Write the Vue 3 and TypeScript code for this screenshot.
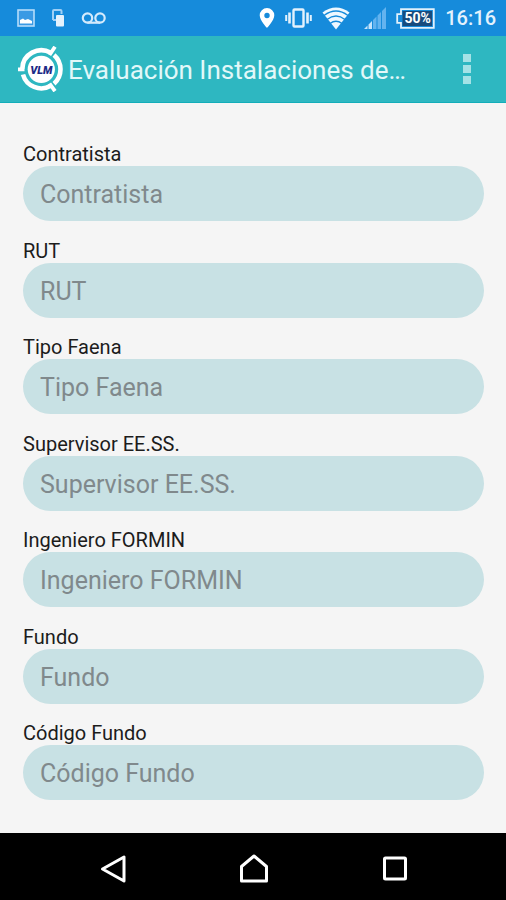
<script setup lang="ts">
import { reactive } from 'vue'

interface Field {
  id: string
  label: string
}

const fields: Field[] = [
  { id: 'contratista', label: 'Contratista' },
  { id: 'rut', label: 'RUT' },
  { id: 'tipo-faena', label: 'Tipo Faena' },
  { id: 'supervisor', label: 'Supervisor EE.SS.' },
  { id: 'ingeniero', label: 'Ingeniero FORMIN' },
  { id: 'fundo', label: 'Fundo' },
  { id: 'codigo-fundo', label: 'Código Fundo' },
]

const values = reactive<Record<string, string>>({})
</script>

<template>
  <div class="screen">
    <div class="status">
      <div class="status-side left">
        <svg width="18" height="18" viewBox="0 0 18 18">
          <rect x="1" y="1" width="16" height="16" fill="#3a9ae4" stroke="#b5dcfa" stroke-width="1.6" />
          <path d="M3 14.500V11l3-1.500 2 1.500 3-1 4 2v2.500z" fill="#fff" />
        </svg>
        <svg width="12" height="18" viewBox="0 0 12 18">
          <path d="M1 11V2q0-1 1-1h6.500q1 0 1 1v3M1 11h3" fill="none" stroke="#9fd0f6" stroke-width="2" />
          <rect x="4" y="6" width="8" height="11.500" rx="1" fill="#e4f2fd" />
        </svg>
        <svg width="26" height="14" viewBox="0 0 26 14" fill="none" stroke="#d3eafc" stroke-width="2.200">
          <circle cx="6.500" cy="7" r="4.700" />
          <circle cx="19" cy="7" r="4.700" />
          <path d="M6.500 11.700H19" />
        </svg>
      </div>
      <div class="status-side right">
        <svg width="16" height="20" viewBox="0 0 16 20">
          <path fill-rule="evenodd" d="M8 0a7.300 7.300 0 0 0-7.300 7.300C.7 12.500 8 20 8 20s7.300-7.500 7.300-12.700A7.300 7.300 0 0 0 8 0zm0 4.800a2.700 2.700 0 1 1 0 5.400 2.700 2.700 0 0 1 0-5.400z" fill="#fff" />
        </svg>
        <svg width="27" height="20" viewBox="0 0 27 20" fill="none" stroke="#e3f2fd">
          <rect x="8.500" y="1.500" width="10" height="17" rx="1" stroke-width="2.400" />
          <path d="M4.500 4.500v11M22.500 4.500v11" stroke-width="2.600" />
          <path d="M1.200 7v6M25.800 7v6" stroke-width="2" />
        </svg>
        <svg width="28" height="23" viewBox="0 0 28 23">
          <path d="M14 22.500L.5 5.500Q14-4.500 27.500 5.500z" fill="#eef8ff" />
          <g fill="none" stroke="#168bdb" stroke-width="1.300">
            <path d="M2 8.500Q14-.5 26 8.500M5 12.500Q14 5.500 23 12.500M8 16.500q6-4.500 12 0" />
          </g>
        </svg>
        <svg class="signal" width="22" height="22" viewBox="0 0 22 22">
          <path d="M0 22l3.500-3.500V22zM4.500 22v-4.500L8 14v8z" fill="#c5e4fc" />
          <path d="M9 22v-9l3.500-3.500V22zM13.500 22V8.500L17 5v17zM18 22V4l4-4v22z" fill="#63b3ef" />
        </svg>
        <div class="battery">
          <svg width="39" height="21" viewBox="0 0 39 21">
            <path d="M5 1.200h32.800v18.600H5v-5H1.200V6.200H5z" fill="#168bdb" stroke="#e1f1fc" stroke-width="1.800" />
            <path d="M6.500 3h29.500v15H6.500z" fill="#174b7d" />
          </svg>
          <span class="percent">50%</span>
        </div>
        <span class="clock">16:16</span>
      </div>
    </div>

    <header class="appbar">
      <svg class="logo" width="46" height="46" viewBox="0 0 46 46">
        <g fill="none" stroke="#fff" stroke-width="4.600">
          <path d="M4.300 22.600A19 19 0 0 1 32.800 6.800" />
          <path d="M36 8.900A19.200 19.200 0 0 1 36 37.700" />
          <path d="M5 28.500A19 19 0 0 0 32.800 39.800" />
        </g>
        <g fill="none" stroke="#fff" stroke-width="3.800">
          <path d="M31.500 9L37 .8M31.500 37.500l5.500 7.700M0 23.300h6.500" />
        </g>
        <circle cx="23.300" cy="23.300" r="13.600" fill="#fff" />
        <text x="23.300" y="27.500" text-anchor="middle" class="logo-text">VLM</text>
      </svg>
      <h1 class="title">Evaluación Instalaciones de…</h1>
      <button class="more" type="button" aria-label="Más opciones">
        <svg width="8" height="30" viewBox="0 0 8 30" fill="#a5e2e6">
          <rect width="8" height="8" y="0" />
          <rect width="8" height="8" y="11" />
          <rect width="8" height="8" y="22" />
        </svg>
      </button>
    </header>

    <form class="form" @submit.prevent>
      <div v-for="field in fields" :key="field.id" class="field">
        <label :for="field.id">{{ field.label }}</label>
        <input :id="field.id" v-model="values[field.id]" type="text" :placeholder="field.label" />
      </div>
    </form>

    <nav class="navbar">
      <button type="button" aria-label="Atrás">
        <svg width="28" height="30" viewBox="0 0 28 30">
          <path d="M3.500 15L25 3v24z" />
        </svg>
      </button>
      <button type="button" aria-label="Inicio">
        <svg width="30" height="30" viewBox="0 0 30 30">
          <path d="M2.500 27V12.500L15 2l12.500 10.500V27z" />
        </svg>
      </button>
      <button type="button" aria-label="Recientes">
        <svg width="28" height="30" viewBox="0 0 28 30">
          <rect x="3.500" y="4" width="21" height="21" rx="1" />
        </svg>
      </button>
    </nav>
  </div>
</template>

<style>
body {
  margin: 0;
  background: #f5f5f5;
}
</style>

<style scoped>
.screen {
  min-height: 100vh;
  display: flex;
  flex-direction: column;
  background: #f5f5f5;
  font-family: Roboto, "Liberation Sans", sans-serif;
}

.status {
  height: 36px;
  padding: 0 10px 0 17px;
  display: flex;
  align-items: center;
  justify-content: space-between;
  background: #168bdb;
}

.status-side {
  display: flex;
  align-items: center;
}

.left {
  gap: 17px;
}

.right {
  gap: 10px;
}

.signal {
  margin-left: 4px;
}

.battery {
  position: relative;
  display: flex;
}

.percent {
  position: absolute;
  inset: 0 0 0 4px;
  display: flex;
  align-items: center;
  justify-content: center;
  font-size: 14px;
  font-weight: 700;
  color: #fff;
}

.clock {
  font-size: 20px;
  font-weight: 500;
  color: #e3f2fd;
}

.appbar {
  height: 67px;
  box-sizing: border-box;
  padding: 0 24px 0 18px;
  display: flex;
  align-items: center;
  background: #2eb7c1;
  border-bottom: 1px solid #12adb9;
}

.logo {
  flex: none;
}

.logo-text {
  font: italic 900 11px Roboto, sans-serif;
  fill: #1c2a86;
}

.title {
  flex: 1;
  margin: 0 0 0 4px;
  padding-top: 2px;
  font-size: 26px;
  font-weight: 400;
  line-height: 32px;
  color: #e2f8f9;
  white-space: nowrap;
}

.more {
  display: flex;
  padding: 8px 11px;
  border: 0;
  background: none;
}

.form {
  flex: 1;
  display: flex;
  flex-direction: column;
  justify-content: space-between;
  padding: 39px 22px 33px 23px;
}

.field {
  display: flex;
  flex-direction: column;
}

label {
  font-size: 20px;
  line-height: 24px;
  color: #1c1c1c;
}

input {
  width: 100%;
  height: 55px;
  box-sizing: border-box;
  padding: 2px 17px 0;
  border: 0;
  border-radius: 28px;
  background: #c8e1e4;
  font-family: inherit;
  font-size: 25px;
  color: #333;
}

input::placeholder {
  color: #80898c;
  opacity: 1;
}

.navbar {
  height: 67px;
  display: flex;
  align-items: center;
  justify-content: center;
  gap: 81px;
  padding: 4px 0 0 1px;
  box-sizing: border-box;
  background: #000;
}

.navbar button {
  width: 60px;
  padding: 0;
  display: flex;
  justify-content: center;
  border: 0;
  background: none;
}

.navbar svg {
  fill: none;
  stroke: #fff;
  stroke-width: 3px;
  stroke-linejoin: round;
}
</style>
